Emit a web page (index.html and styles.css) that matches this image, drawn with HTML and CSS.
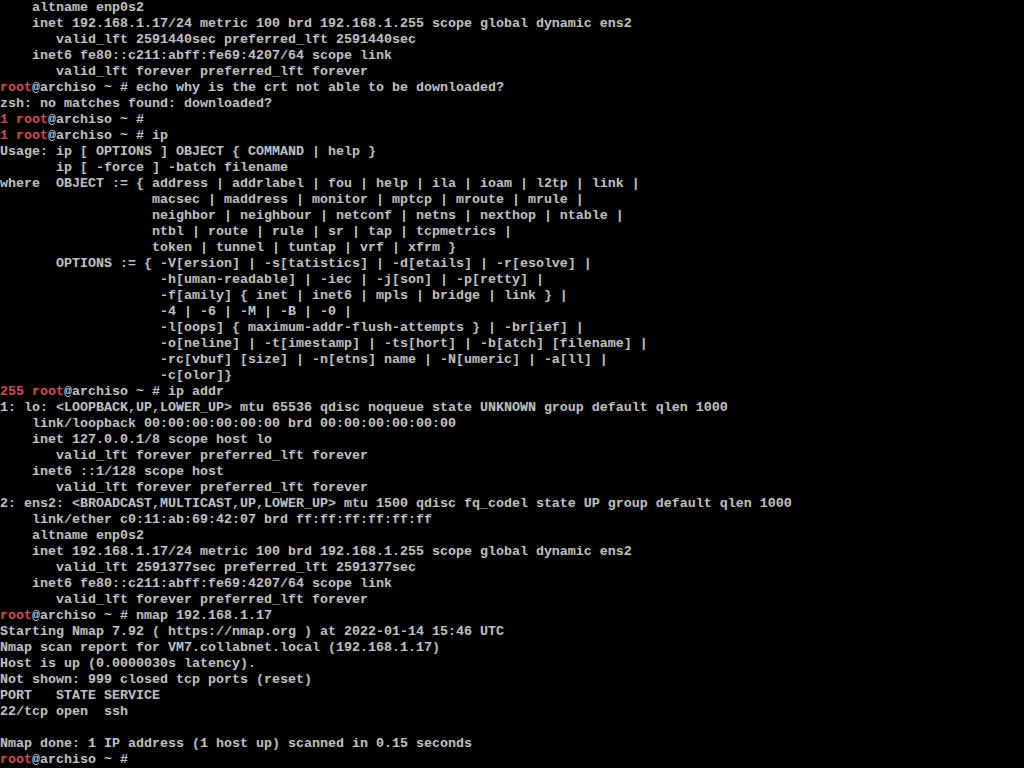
FILE: index.html
```html
<!DOCTYPE html>
<html>
<head>
<meta charset="utf-8">
<title>tty</title>
<link rel="stylesheet" href="styles.css">
</head>
<body>
<pre class="tty">    altname enp0s2
    inet 192.168.1.17/24 metric 100 brd 192.168.1.255 scope global dynamic ens2
       valid_lft 2591440sec preferred_lft 2591440sec
    inet6 fe80::c211:abff:fe69:4207/64 scope link
       valid_lft forever preferred_lft forever
<span class="red">root</span>@archiso ~ # echo why is the crt not able to be downloaded?
zsh: no matches found: downloaded?
<span class="red">1 root</span>@archiso ~ #
<span class="red">1 root</span>@archiso ~ # ip
Usage: ip [ OPTIONS ] OBJECT { COMMAND | help }
       ip [ -force ] -batch filename
where  OBJECT := { address | addrlabel | fou | help | ila | ioam | l2tp | link |
                   macsec | maddress | monitor | mptcp | mroute | mrule |
                   neighbor | neighbour | netconf | netns | nexthop | ntable |
                   ntbl | route | rule | sr | tap | tcpmetrics |
                   token | tunnel | tuntap | vrf | xfrm }
       OPTIONS := { -V[ersion] | -s[tatistics] | -d[etails] | -r[esolve] |
                    -h[uman-readable] | -iec | -j[son] | -p[retty] |
                    -f[amily] { inet | inet6 | mpls | bridge | link } |
                    -4 | -6 | -M | -B | -0 |
                    -l[oops] { maximum-addr-flush-attempts } | -br[ief] |
                    -o[neline] | -t[imestamp] | -ts[hort] | -b[atch] [filename] |
                    -rc[vbuf] [size] | -n[etns] name | -N[umeric] | -a[ll] |
                    -c[olor]}
<span class="red">255 root</span>@archiso ~ # ip addr
1: lo: &lt;LOOPBACK,UP,LOWER_UP&gt; mtu 65536 qdisc noqueue state UNKNOWN group default qlen 1000
    link/loopback 00:00:00:00:00:00 brd 00:00:00:00:00:00
    inet 127.0.0.1/8 scope host lo
       valid_lft forever preferred_lft forever
    inet6 ::1/128 scope host
       valid_lft forever preferred_lft forever
2: ens2: &lt;BROADCAST,MULTICAST,UP,LOWER_UP&gt; mtu 1500 qdisc fq_codel state UP group default qlen 1000
    link/ether c0:11:ab:69:42:07 brd ff:ff:ff:ff:ff:ff
    altname enp0s2
    inet 192.168.1.17/24 metric 100 brd 192.168.1.255 scope global dynamic ens2
       valid_lft 2591377sec preferred_lft 2591377sec
    inet6 fe80::c211:abff:fe69:4207/64 scope link
       valid_lft forever preferred_lft forever
<span class="red">root</span>@archiso ~ # nmap 192.168.1.17
Starting Nmap 7.92 ( https://nmap.org ) at 2022-01-14 15:46 UTC
Nmap scan report for VM7.collabnet.local (192.168.1.17)
Host is up (0.0000030s latency).
Not shown: 999 closed tcp ports (reset)
PORT   STATE SERVICE
22/tcp open  ssh

Nmap done: 1 IP address (1 host up) scanned in 0.15 seconds
<span class="red">root</span>@archiso ~ #</pre>
</body>
</html>
```
FILE: styles.css
```css
html, body {
  margin: 0;
  padding: 0;
  background: #000;
  height: 100%;
  overflow: hidden;
}
.tty {
  margin: 0;
  padding: 0;
  font-family: "Liberation Mono", "DejaVu Sans Mono", monospace;
  font-size: 13.3333px;
  line-height: 16px;
  font-weight: bold;
  color: #c2c2c2;
  white-space: pre;
}
.red {
  color: #d8475a;
}
```
